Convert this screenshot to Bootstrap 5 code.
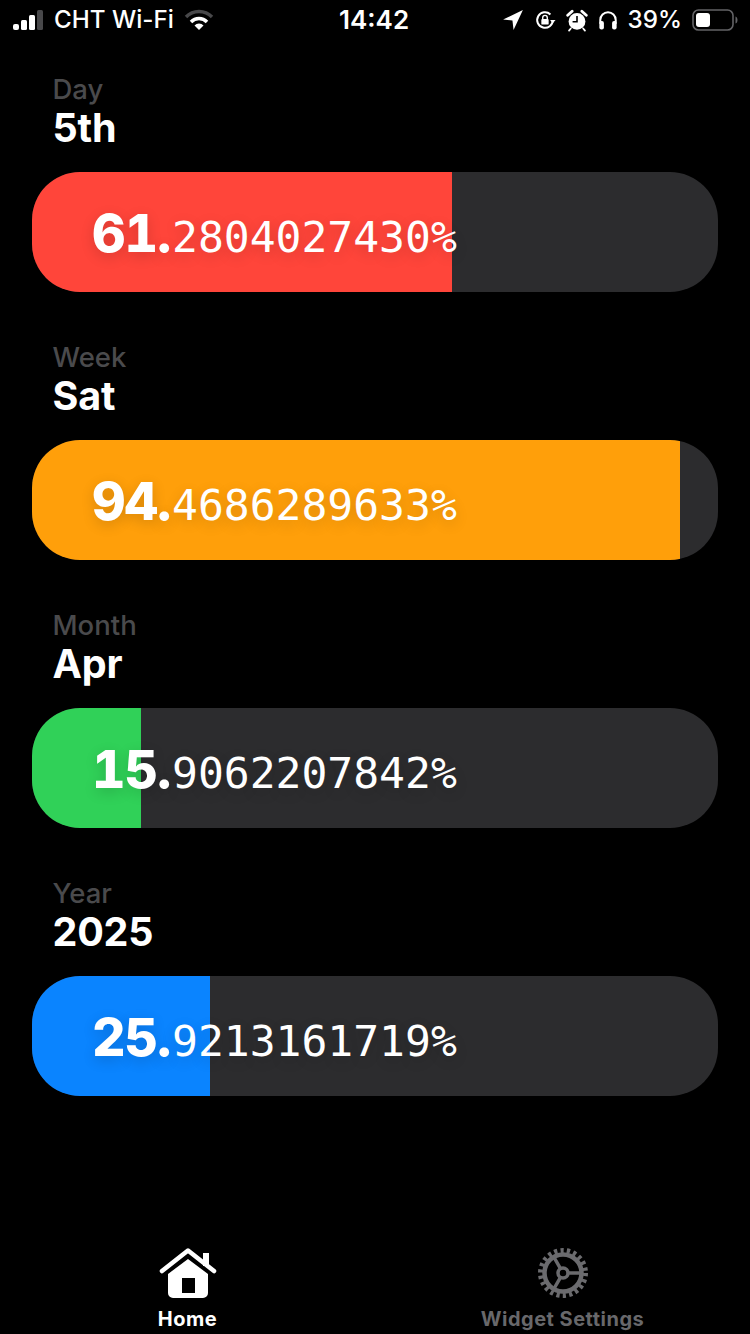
<!doctype html>
<html lang="en">
<head>
<meta charset="utf-8">
<title>Progress</title>
<link href="https://cdn.jsdelivr.net/npm/bootstrap@5.3.0/dist/css/bootstrap.min.css" rel="stylesheet">
<style>
html,body{height:1334px;margin:0;background:#000;overflow:hidden}
body{font-family:Inter,"Liberation Sans",sans-serif;color:#fff}
.app-shell{width:750px;height:1334px}
.status-row{height:40px;padding:0 12px 0 12px;font-size:24.2px;line-height:40px;font-weight:500}
.status-time{font-size:26px;font-weight:600;left:339px;top:0}
.wifi-glyph{margin-left:2px}
.blocks-wrap{padding:34px 32px 0;gap:50px}
.cap-text{font-size:27.5px;line-height:30px;color:#4a4a4c;margin-left:20.5px;font-weight:500}
.head-text{font-size:39.5px;line-height:48px;font-weight:700;margin-left:20.5px;margin-bottom:20px;letter-spacing:-.2px}
.meter-track{height:120px;background:#2c2c2e;border-radius:48px;overflow:hidden}
.meter-fill{height:100%}
.meter-red{background:#ff453a}.meter-orange{background:#ff9f0a}.meter-green{background:#30d158}.meter-blue{background:#0a84ff}
.meter-label{position:absolute;left:60px;top:2px;height:120px;line-height:120px;white-space:nowrap;text-shadow:0 4px 14px rgba(0,0,0,.16)}
.meter-int{font-family:Inter,sans-serif;font-size:52px;font-weight:800;display:inline-block;width:80px;letter-spacing:-1px;font-variant-numeric:tabular-nums}
.meter-frac{font-family:"DejaVu Sans Mono",monospace;font-size:43px;font-weight:400}
.tab-bar{height:87px;padding:0}
.tab-cell{width:50%;font-size:20px;font-weight:700;line-height:24px;letter-spacing:.5px}
.tab-cell span{margin-top:8px}
.tab-active{color:#fff}.tab-muted{color:#68686b}
.status-icons{gap:10px}
</style>
</head>
<body>
<div class="app-shell d-flex flex-column position-relative">
  <div class="status-row d-flex justify-content-between align-items-center">
    <div class="d-flex align-items-center gap-2">
      <svg width="34" height="22" viewBox="0 0 34 22"><g fill="#fff"><rect x="1" y="15" width="6" height="6" rx="2"/><rect x="9" y="11" width="6" height="10" rx="1.5"/><rect x="17" y="6" width="6" height="15" rx="1.5"/></g><rect x="25" y="1" width="6" height="20" rx="1.5" fill="#48484a"/></svg>
      <span>CHT Wi-Fi</span>
      <svg width="30" height="22" viewBox="0 0 30 22" class="wifi-glyph"><path d="M2 8a18 18 0 0 1 26 0" fill="none" stroke="#48484a" stroke-width="3.4"/><path d="M7 13a11 11 0 0 1 16 0" fill="none" stroke="#fff" stroke-width="3.4"/><path d="M10.500 16.500a6 6 0 0 1 9 0L15 21z" fill="#fff"/></svg>
    </div>
    <span class="status-time position-absolute">14:42</span>
    <div class="status-icons d-flex align-items-center">
      <svg width="22" height="22" viewBox="0 0 20 20"><path d="M19 1 1 9.500l8.500 1 1 8.500z" fill="#fff"/></svg>
      <svg width="22" height="22" viewBox="0 0 24 24"><path d="M20.500 12a8.500 8.500 0 1 1-2.600-6.100" fill="none" stroke="#fff" stroke-width="2.200"/><path d="M23.500 12h-6l3 3.500z" fill="#fff"/><rect x="8" y="11" width="8" height="6" rx="1" fill="#fff"/><path d="M9.500 11V9.500a2.500 2.500 0 0 1 5 0V11" fill="none" stroke="#fff" stroke-width="1.500"/></svg>
      <svg width="22" height="23" viewBox="0 0 24 26"><circle cx="12" cy="14" r="9.500" fill="#fff"/><path d="M12 8v6.500H7" fill="none" stroke="#000" stroke-width="1.800"/><path d="M1.500 7 6.500 2.500M22.500 7l-5-4.500" stroke="#fff" stroke-width="3.200" stroke-linecap="round"/><path d="M5 22l-2 2.500M19 22l2 2.500" stroke="#fff" stroke-width="2" stroke-linecap="round"/></svg>
      <svg width="20" height="20" viewBox="0 0 22 22"><path d="M2.500 15v-4a8.500 8.500 0 0 1 17 0v4" fill="none" stroke="#fff" stroke-width="2.200"/><rect x="1.500" y="12" width="5" height="9.500" rx="2.200" fill="#fff"/><rect x="15.500" y="12" width="5" height="9.500" rx="2.200" fill="#fff"/></svg>
      <span>39%</span>
      <svg width="46" height="24" viewBox="0 0 46 24"><rect x="1" y="2" width="40" height="20" rx="5.500" fill="none" stroke="#636366" stroke-width="1.600"/><rect x="4" y="5" width="14" height="14" rx="3" fill="#fff"/><path d="M43.500 8.500c1.500.5 2 2 2 3.500s-.5 3-2 3.500z" fill="#636366"/></svg>
    </div>
  </div>

  <main class="blocks-wrap d-flex flex-column">
    <section>
      <div class="cap-text">Day</div>
      <div class="head-text">5th</div>
      <div class="meter-track position-relative">
        <div class="meter-fill meter-red" style="width:61.2804%"></div>
        <div class="meter-label"><span class="meter-int">61.</span><span class="meter-frac">2804027430%</span></div>
      </div>
    </section>
    <section>
      <div class="cap-text">Week</div>
      <div class="head-text">Sat</div>
      <div class="meter-track position-relative">
        <div class="meter-fill meter-orange" style="width:94.4686%"></div>
        <div class="meter-label"><span class="meter-int">94.</span><span class="meter-frac">4686289633%</span></div>
      </div>
    </section>
    <section>
      <div class="cap-text">Month</div>
      <div class="head-text">Apr</div>
      <div class="meter-track position-relative">
        <div class="meter-fill meter-green" style="width:15.9062%"></div>
        <div class="meter-label"><span class="meter-int">15.</span><span class="meter-frac">9062207842%</span></div>
      </div>
    </section>
    <section>
      <div class="cap-text">Year</div>
      <div class="head-text">2025</div>
      <div class="meter-track position-relative">
        <div class="meter-fill meter-blue" style="width:25.9213%"></div>
        <div class="meter-label"><span class="meter-int">25.</span><span class="meter-frac">9213161719%</span></div>
      </div>
    </section>
  </main>

  <nav class="tab-bar d-flex mt-auto">
    <div class="tab-cell tab-active d-flex flex-column align-items-center">
      <svg width="60" height="52" viewBox="0 0 60 52"><path d="M4 24 30 3.500 56 24" fill="none" stroke="#fff" stroke-width="4.500" stroke-linecap="round" stroke-linejoin="round"/><path d="M45 6h6v13h-6z" fill="#fff"/><path fill-rule="evenodd" d="M30 12 10 27v19a5 5 0 0 0 5 5h30a5 5 0 0 0 5-5V27zM24 31h13v15H24z" fill="#fff"/></svg>
      <span>Home</span>
    </div>
    <div class="tab-cell tab-muted d-flex flex-column align-items-center">
      <svg width="52" height="52" viewBox="0 0 52 52"><circle cx="26" cy="26" r="22.500" fill="none" stroke="#6b6b6e" stroke-width="5" stroke-dasharray="3.200 3.227"/><circle cx="26" cy="26" r="18.500" fill="none" stroke="#6b6b6e" stroke-width="4.500"/><circle cx="26" cy="26" r="5" fill="none" stroke="#6b6b6e" stroke-width="3.500"/><path d="M31 26h13M23.500 21.700 16.500 9.500M23.500 30.300l-7 12.200" stroke="#6b6b6e" stroke-width="3.500"/></svg>
      <span>Widget Settings</span>
    </div>
  </nav>
</div>
</body>
</html>
